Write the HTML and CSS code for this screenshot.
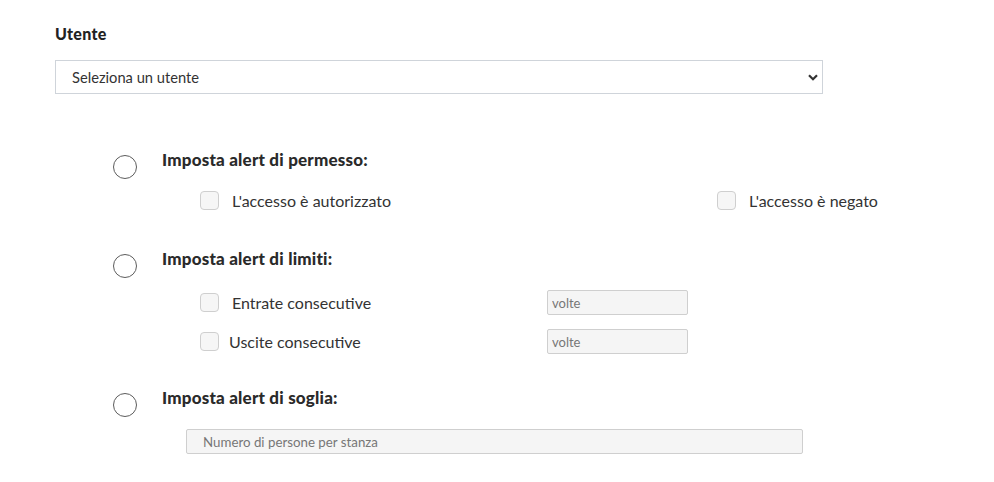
FILE: index.html
```html
<!DOCTYPE html>
<html lang="it">
<head>
<meta charset="utf-8">
<title>Alert</title>
<link rel="stylesheet" href="styles.css">
</head>
<body>
<main class="page">
  <div class="field-label">Utente</div>
  <div class="select-wrap">
    <select class="select">
      <option>Seleziona un utente</option>
    </select>
    <svg class="chevron" width="10" height="7" viewBox="0 0 10 7"><path d="M1 1.2 L5 5.2 L9 1.2" fill="none" stroke="#333" stroke-width="2.2"/></svg>
  </div>

  <section class="section s1">
    <span class="radio"></span>
    <div class="content">
      <div class="heading">Imposta alert di permesso:</div>
      <div class="options">
        <label class="check"><span class="box"></span><span>L'accesso è autorizzato</span></label>
        <label class="check"><span class="box"></span><span>L'accesso è negato</span></label>
      </div>
    </div>
  </section>

  <section class="section s2">
    <span class="radio"></span>
    <div class="content">
      <div class="heading">Imposta alert di limiti:</div>
      <div class="limit-row first">
        <label class="check"><span class="box"></span><span>Entrate consecutive</span></label>
        <input class="input small" type="text" placeholder="volte">
      </div>
      <div class="limit-row">
        <label class="check tight"><span class="box"></span><span>Uscite consecutive</span></label>
        <input class="input small" type="text" placeholder="volte">
      </div>
    </div>
  </section>

  <section class="section s3">
    <span class="radio"></span>
    <div class="content">
      <div class="heading">Imposta alert di soglia:</div>
      <input class="input wide" type="text" placeholder="Numero di persone per stanza">
    </div>
  </section>
</main>
</body>
</html>
```

FILE: styles.css
```css
* { box-sizing: border-box; }
html, body { margin: 0; padding: 0; background: #fff; }
body {
  font-family: Lato, "Liberation Sans", sans-serif;
  color: #2b2b2b;
}
.page {
  padding: 24px 0 0 55px;
}
.field-label {
  font-size: 16px;
  font-weight: 900;
  letter-spacing: 0.3px;
  line-height: 20px;
  color: #222;
}
.select-wrap {
  position: relative;
  width: 768px;
  margin-top: 16px;
}
.select {
  display: block;
  width: 100%;
  height: 34px;
  appearance: none;
  -webkit-appearance: none;
  border: 1px solid #cfd4da;
  border-radius: 0;
  background: #fff;
  padding: 0 16px;
  font-family: inherit;
  font-size: 14.7px;
  color: #333;
}
.chevron {
  position: absolute;
  top: 14px;
  right: 5px;
  width: 10px;
  height: 7px;
}
.section {
  display: flex;
  align-items: flex-start;
  margin-left: 58px;
}
.s1 { margin-top: 55px; }
.s2 { margin-top: 38px; }
.s3 { margin-top: 33px; }
.radio {
  flex: none;
  width: 24px;
  height: 24px;
  border: 1.6px solid #5c5c5c;
  border-radius: 50%;
  margin-top: 6px;
  margin-right: 25px;
}
.content { flex: 1; }
.heading {
  font-size: 17px;
  font-weight: 900;
  letter-spacing: 0.2px;
  line-height: 22px;
  color: #2a2a2a;
}
.options {
  display: grid;
  grid-template-columns: 517px auto;
  margin: 20px 0 0 38px;
}
.check {
  display: flex;
  align-items: center;
  gap: 13px;
  font-size: 16px;
  line-height: 19px;
  color: #333;
}
.check.tight { gap: 10px; }
.box {
  flex: none;
  width: 19px;
  height: 19px;
  border: 1px solid #cfcfcf;
  border-radius: 4px;
  background: #f6f6f6;
}
.limit-row {
  display: grid;
  grid-template-columns: 347px 141px;
  align-items: center;
  margin-left: 38px;
  margin-top: 14px;
}
.limit-row.first { margin-top: 20px; }
.input {
  display: block;
  height: 25px;
  border: 1px solid #cfcfcf;
  border-radius: 2px;
  background: #f5f5f5;
  font-family: inherit;
  font-size: 13px;
  color: #444;
  outline: none;
}
.input::placeholder { color: #777; }
.input.small {
  width: 141px;
  padding: 0 4px;
}
.input.wide {
  width: 617px;
  margin: 20px 0 0 24px;
  padding: 0 16px;
  font-size: 13.3px;
}
```
